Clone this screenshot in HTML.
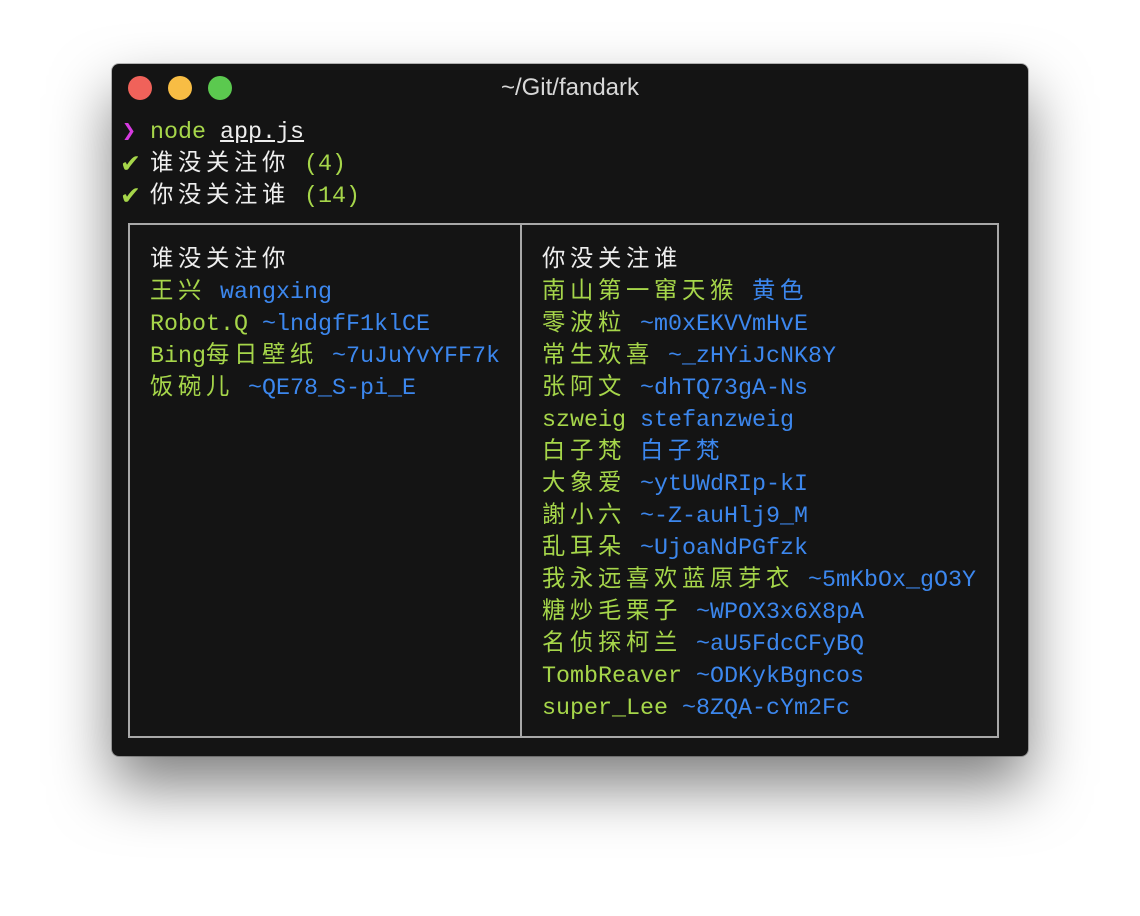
<!DOCTYPE html>
<html><head><meta charset="utf-8"><style>
html,body{margin:0;padding:0;width:1140px;height:916px;background:#fff;overflow:hidden}
.win{position:absolute;left:112px;top:64px;width:916px;height:692px;background:#141414;border-radius:7px;box-shadow:0 30px 60px rgba(0,0,0,.5),0 0 0 1px rgba(0,0,0,.25)}
.dot{position:absolute;top:76px;width:24px;height:24px;border-radius:50%}
.title{position:absolute;left:112px;width:916px;top:74px;text-align:center;font:24px "Liberation Sans",sans-serif;color:#d8d8d8}
.l{position:absolute;height:32px;line-height:32px;font-family:"Liberation Mono","Noto Sans CJK SC",monospace;font-size:23.33px;white-space:pre;color:#eee}
.c{letter-spacing:4.67px}
.g{color:#a6d64a}.b{color:#3c87ee}.w{color:#eee}
.ck{position:absolute;left:0;top:-1px;font-size:25px;line-height:32px;color:#a6d64a;font-family:"DejaVu Sans",sans-serif}
.box{position:absolute;left:128px;top:223px;width:867px;height:511px;border:2px solid #a8a8a8}
.div{position:absolute;left:520px;top:224px;width:2px;height:512px;background:#a8a8a8}
</style></head><body>
<div class="win"></div>
<div class="dot" style="left:128px;background:#f0625a"></div>
<div class="dot" style="left:168px;background:#f8bd44"></div>
<div class="dot" style="left:208px;background:#5bc94f"></div>
<div class="title">~/Git/fandark</div>
<div class="l" style="left:122px;top:117px"><span style="color:#d63ae0">❯</span> <span class="g">node</span> <span style="text-decoration:underline">app.js</span></div>
<div class="l" style="left:120px;top:149px"><span class="ck">✔</span></div>
<div class="l" style="left:150px;top:149px"><span class="c">谁没关注你</span> <span class="g">(4)</span></div>
<div class="l" style="left:120px;top:181px"><span class="ck">✔</span></div>
<div class="l" style="left:150px;top:181px"><span class="c">你没关注谁</span> <span class="g">(14)</span></div>
<div class="box"></div><div class="div"></div>
<div class="l" style="left:150px;top:245px"><span class="c">谁没关注你</span></div>
<div class="l" style="left:150px;top:277px"><span class="g c">王兴</span> <span class="b">wangxing</span></div>
<div class="l" style="left:150px;top:309px"><span class="g">Robot.Q</span> <span class="b">~lndgfF1klCE</span></div>
<div class="l" style="left:150px;top:341px"><span class="g">Bing<span class="c">每日壁纸</span></span> <span class="b">~7uJuYvYFF7k</span></div>
<div class="l" style="left:150px;top:373px"><span class="g c">饭碗儿</span> <span class="b">~QE78_S-pi_E</span></div>
<div class="l" style="left:542px;top:245px"><span class="c">你没关注谁</span></div>
<div class="l" style="left:542px;top:277px"><span class="g c">南山第一窜天猴</span> <span class="b c">黄色</span></div>
<div class="l" style="left:542px;top:309px"><span class="g c">零波粒</span> <span class="b">~m0xEKVVmHvE</span></div>
<div class="l" style="left:542px;top:341px"><span class="g c">常生欢喜</span> <span class="b">~_zHYiJcNK8Y</span></div>
<div class="l" style="left:542px;top:373px"><span class="g c">张阿文</span> <span class="b">~dhTQ73gA-Ns</span></div>
<div class="l" style="left:542px;top:405px"><span class="g">szweig</span> <span class="b">stefanzweig</span></div>
<div class="l" style="left:542px;top:437px"><span class="g c">白子梵</span> <span class="b c">白子梵</span></div>
<div class="l" style="left:542px;top:469px"><span class="g c">大象爱</span> <span class="b">~ytUWdRIp-kI</span></div>
<div class="l" style="left:542px;top:501px"><span class="g c">謝小六</span> <span class="b">~-Z-auHlj9_M</span></div>
<div class="l" style="left:542px;top:533px"><span class="g c">乱耳朵</span> <span class="b">~UjoaNdPGfzk</span></div>
<div class="l" style="left:542px;top:565px"><span class="g c">我永远喜欢蓝原芽衣</span> <span class="b">~5mKbOx_gO3Y</span></div>
<div class="l" style="left:542px;top:597px"><span class="g c">糖炒毛栗子</span> <span class="b">~WPOX3x6X8pA</span></div>
<div class="l" style="left:542px;top:629px"><span class="g c">名侦探柯兰</span> <span class="b">~aU5FdcCFyBQ</span></div>
<div class="l" style="left:542px;top:661px"><span class="g">TombReaver</span> <span class="b">~ODKykBgncos</span></div>
<div class="l" style="left:542px;top:693px"><span class="g">super_Lee</span> <span class="b">~8ZQA-cYm2Fc</span></div>
</body></html>
